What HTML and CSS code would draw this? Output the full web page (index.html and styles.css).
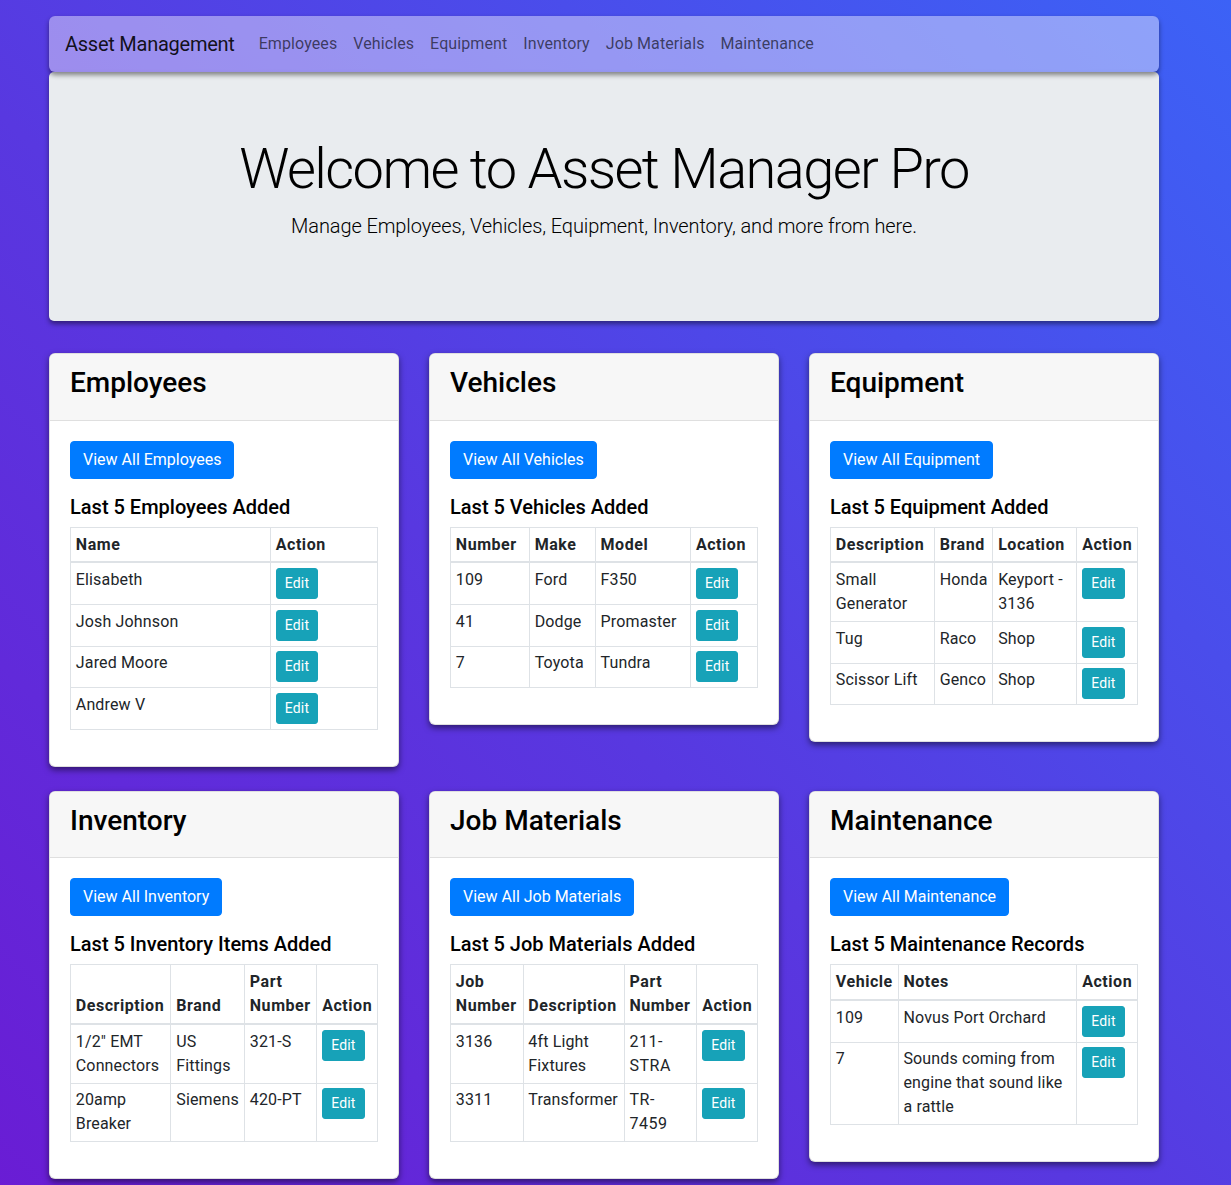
FILE: index.html
```html
<!DOCTYPE html>
<html lang="en">
<head>
<meta charset="utf-8">
<title>Asset Manager Pro</title>
<link rel="stylesheet" href="styles.css">
</head>
<body>
<div class="container">
  <nav class="navbar">
    <a class="brand" href="#">Asset Management</a>
    <ul class="nav">
      <li><a href="#">Employees</a></li>
      <li><a href="#">Vehicles</a></li>
      <li><a href="#">Equipment</a></li>
      <li><a href="#">Inventory</a></li>
      <li><a href="#">Job Materials</a></li>
      <li><a href="#">Maintenance</a></li>
    </ul>
  </nav>

  <header class="hero">
    <h1>Welcome to Asset Manager Pro</h1>
    <p class="lead">Manage Employees, Vehicles, Equipment, Inventory, and more from here.</p>
  </header>

  <div class="row">
    <section class="card">
      <div class="card-header"><h3>Employees</h3></div>
      <div class="card-body">
        <a class="btn-primary" href="#">View All Employees</a>
        <h5>Last 5 Employees Added</h5>
        <table>
          <thead><tr><th>Name</th><th>Action</th></tr></thead>
          <tbody>
            <tr><td>Elisabeth</td><td><a class="btn-edit" href="#">Edit</a></td></tr>
            <tr><td>Josh Johnson</td><td><a class="btn-edit" href="#">Edit</a></td></tr>
            <tr><td>Jared Moore</td><td><a class="btn-edit" href="#">Edit</a></td></tr>
            <tr><td>Andrew V</td><td><a class="btn-edit" href="#">Edit</a></td></tr>
          </tbody>
        </table>
      </div>
    </section>

    <section class="card">
      <div class="card-header"><h3>Vehicles</h3></div>
      <div class="card-body">
        <a class="btn-primary" href="#">View All Vehicles</a>
        <h5>Last 5 Vehicles Added</h5>
        <table>
          <thead><tr><th>Number</th><th>Make</th><th>Model</th><th>Action</th></tr></thead>
          <tbody>
            <tr><td>109</td><td>Ford</td><td>F350</td><td><a class="btn-edit" href="#">Edit</a></td></tr>
            <tr><td>41</td><td>Dodge</td><td>Promaster</td><td><a class="btn-edit" href="#">Edit</a></td></tr>
            <tr><td>7</td><td>Toyota</td><td>Tundra</td><td><a class="btn-edit" href="#">Edit</a></td></tr>
          </tbody>
        </table>
      </div>
    </section>

    <section class="card">
      <div class="card-header"><h3>Equipment</h3></div>
      <div class="card-body">
        <a class="btn-primary" href="#">View All Equipment</a>
        <h5>Last 5 Equipment Added</h5>
        <table>
          <thead><tr><th>Description</th><th>Brand</th><th>Location</th><th>Action</th></tr></thead>
          <tbody>
            <tr><td>Small Generator</td><td>Honda</td><td>Keyport - 3136</td><td><a class="btn-edit" href="#">Edit</a></td></tr>
            <tr><td>Tug</td><td>Raco</td><td>Shop</td><td><a class="btn-edit" href="#">Edit</a></td></tr>
            <tr><td>Scissor Lift</td><td>Genco</td><td>Shop</td><td><a class="btn-edit" href="#">Edit</a></td></tr>
          </tbody>
        </table>
      </div>
    </section>
  </div>

  <div class="row">
    <section class="card">
      <div class="card-header"><h3>Inventory</h3></div>
      <div class="card-body">
        <a class="btn-primary" href="#">View All Inventory</a>
        <h5>Last 5 Inventory Items Added</h5>
        <table>
          <thead><tr><th>Description</th><th>Brand</th><th>Part Number</th><th>Action</th></tr></thead>
          <tbody>
            <tr><td>1/2" EMT Connectors</td><td>US Fittings</td><td>321-S</td><td><a class="btn-edit" href="#">Edit</a></td></tr>
            <tr><td>20amp Breaker</td><td>Siemens</td><td>420-PT</td><td><a class="btn-edit" href="#">Edit</a></td></tr>
          </tbody>
        </table>
      </div>
    </section>

    <section class="card">
      <div class="card-header"><h3>Job Materials</h3></div>
      <div class="card-body">
        <a class="btn-primary" href="#">View All Job Materials</a>
        <h5>Last 5 Job Materials Added</h5>
        <table>
          <thead><tr><th>Job Number</th><th>Description</th><th>Part Number</th><th>Action</th></tr></thead>
          <tbody>
            <tr><td>3136</td><td>4ft Light Fixtures</td><td class="part">211-STRA</td><td><a class="btn-edit" href="#">Edit</a></td></tr>
            <tr><td>3311</td><td>Transformer</td><td class="part">TR-7459</td><td><a class="btn-edit" href="#">Edit</a></td></tr>
          </tbody>
        </table>
      </div>
    </section>

    <section class="card">
      <div class="card-header"><h3>Maintenance</h3></div>
      <div class="card-body">
        <a class="btn-primary" href="#">View All Maintenance</a>
        <h5>Last 5 Maintenance Records</h5>
        <table>
          <thead><tr><th>Vehicle</th><th>Notes</th><th>Action</th></tr></thead>
          <tbody>
            <tr><td>109</td><td>Novus Port Orchard</td><td><a class="btn-edit" href="#">Edit</a></td></tr>
            <tr><td>7</td><td>Sounds coming from engine that sound like a rattle</td><td><a class="btn-edit" href="#">Edit</a></td></tr>
          </tbody>
        </table>
      </div>
    </section>
  </div>
</div>
</body>
</html>
```

FILE: styles.css
```css
* { box-sizing: border-box; }

html, body {
  margin: 0;
  padding: 0;
}

body {
  font-family: Roboto, "Noto Sans", "Liberation Sans", sans-serif;
  font-size: 16px;
  line-height: 1.5;
  color: #212529;
  background: linear-gradient(45deg, #6a1cd4 0%, #5838e0 45%, #3c62f6 100%);
  min-height: 1185px;
}

a { text-decoration: none; }

.container {
  width: 1110px;
  margin-left: 49px;
  padding-top: 16px;
  padding-bottom: 8px;
}

/* NAVBAR */
.navbar {
  display: flex;
  align-items: center;
  height: 56px;
  padding: 8px 16px;
  border-radius: 6px;
  background: rgba(255, 255, 255, 0.42);
  box-shadow: 0 3px 5px rgba(0, 0, 0, 0.45);
  position: relative;
  z-index: 2;
}

.brand {
  font-size: 20px;
  line-height: 30px;
  letter-spacing: -0.25px;
  color: rgba(0, 0, 0, 0.9);
  margin-right: 16px;
}

.nav {
  display: flex;
  list-style: none;
  margin: 0;
  padding: 0;
}

.nav a {
  display: block;
  padding: 8px;
  font-size: 16px;
  line-height: 24px;
  letter-spacing: 0.1px;
  color: rgba(0, 0, 0, 0.62);
}

/* HERO */
.hero {
  background: #e9ecef;
  border-radius: 5px;
  padding: 64px 32px;
  text-align: center;
  box-shadow: 0 3px 5px rgba(0, 0, 0, 0.45);
  margin-bottom: 32px;
  color: #000;
}

.hero h1 {
  margin: 0 0 8px;
  font-size: 56px;
  font-weight: 300;
  line-height: 1.2;
  letter-spacing: -1.6px;
}

.lead {
  margin: 0 0 16px;
  font-size: 20px;
  font-weight: 300;
  line-height: 30px;
  letter-spacing: -0.1px;
}

/* CARDS */
.row {
  display: flex;
  align-items: flex-start;
  gap: 30px;
  margin-bottom: 24px;
}

.card {
  flex: 0 0 350px;
  background: #fff;
  border: 1px solid rgba(0, 0, 0, 0.125);
  border-radius: 6px;
  overflow: hidden;
  box-shadow: 0 3px 6px rgba(0, 0, 0, 0.5);
}

.card-header {
  background: #f7f7f7;
  border-bottom: 1px solid #dfdfdf;
  padding: 12px 20px;
}

.card-header h3 {
  margin: 0 0 8px;
  font-size: 28px;
  font-weight: 500;
  line-height: 1.2;
  color: #000;
}

.card-body {
  padding: 20px;
}

.btn-primary {
  display: inline-block;
  background: #007bff;
  color: #fff;
  font-size: 16px;
  line-height: 24px;
  padding: 6px 12px;
  border: 1px solid #007bff;
  border-radius: 4px;
  margin-bottom: 16px;
}

.card-body h5 {
  margin: 0 0 8px;
  font-size: 20px;
  font-weight: 500;
  line-height: 1.2;
  color: #000;
}

table {
  width: 100%;
  border-collapse: collapse;
  margin-bottom: 16px;
  color: #212529;
}

th, td {
  border: 1px solid #dee2e6;
  padding: 4.8px;
  text-align: left;
  vertical-align: top;
}

td {
  letter-spacing: 0.15px;
}

td.part {
  letter-spacing: 0.5px;
}

thead th {
  vertical-align: bottom;
  border-bottom: 2px solid #dee2e6;
  font-weight: 700;
  letter-spacing: 0.55px;
}

.btn-edit {
  display: inline-block;
  background: #17a2b8;
  color: #fff;
  font-size: 14px;
  line-height: 21px;
  letter-spacing: 0.2px;
  padding: 4px 8px;
  border: 1px solid #17a2b8;
  border-radius: 3px;
}
```
